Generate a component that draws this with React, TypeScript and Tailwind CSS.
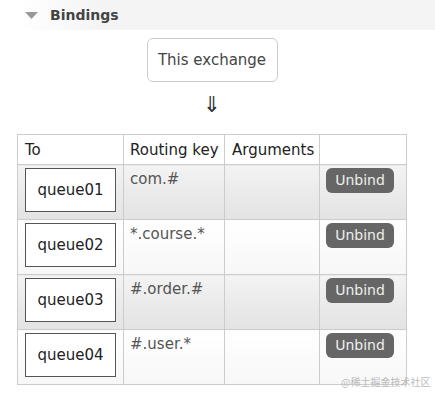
const rows = [
  { queue: "queue01", key: "com.#" },
  { queue: "queue02", key: "*.course.*" },
  { queue: "queue03", key: "#.order.#" },
  { queue: "queue04", key: "#.user.*" },
];

export default function App() {
  return (
    <div className="relative h-[403px] w-[435px] overflow-hidden bg-white font-['DejaVu_Sans',Verdana,sans-serif] text-[15px] text-[#222]">
      <div className="ml-[18px] flex h-[30px] items-center bg-gradient-to-r from-white to-[#f4f4f4] to-[20%] pl-[7px]">
        <svg width="13" height="7" viewBox="0 0 13 7" className="mt-[1px]">
          <polygon points="0,0 13,0 6.5,7" fill="#999" />
        </svg>
        <span className="ml-[12px] text-[14px] font-bold text-[#444]">Bindings</span>
      </div>

      <div className="ml-[17px] w-[390px]">
        <div className="mx-auto mt-[8px] flex h-[44px] w-[131px] items-center justify-center rounded-[6px] border border-[#ccc] text-[#444]">
          This exchange
        </div>
        <div className="mt-[10px] flex h-[26px] justify-center text-[22px] leading-[26px] text-[#333]">⇓</div>

        <table className="mt-[16px] w-[390px] table-fixed border-collapse whitespace-nowrap">
          <thead>
            <tr className="h-[30px] text-left">
              <th className="w-[106px] border border-[#ccc] px-[7px] pt-[2px] font-normal">To</th>
              <th className="w-[101px] border border-[#ccc] px-[6px] pt-[2px] font-normal">Routing key</th>
              <th className="w-[95px] border border-[#ccc] px-[7px] pt-[2px] font-normal">Arguments</th>
              <th className="border border-[#ccc] px-[7px] font-normal"></th>
            </tr>
          </thead>
          <tbody>
            {rows.map((r, i) => {
              const bg =
                i % 2 === 0
                  ? "bg-gradient-to-b from-[#f3f3f3] to-[#e3e3e3]"
                  : "bg-gradient-to-b from-white to-[#f7f7f7]";
              return (
                <tr key={r.queue} className="h-[55px]">
                  <td className={`border border-[#ccc] px-[7px] align-top pt-[3px] ${bg}`}>
                    <div className="flex h-[44px] w-[91px] items-center justify-center border border-[#555] bg-white">
                      {r.queue}
                    </div>
                  </td>
                  <td className={`border border-[#ccc] px-[6px] pt-[3px] align-top text-[#555] ${bg}`}>{r.key}</td>
                  <td className={`border border-[#ccc] ${bg}`}></td>
                  <td className={`border border-[#ccc] px-[6px] pt-[3px] align-top ${bg}`}>
                    <button className="flex h-[25px] w-[68px] items-center justify-center rounded-[6px] bg-[#666] text-[14px] text-[#eee]">
                      Unbind
                    </button>
                  </td>
                </tr>
              );
            })}
          </tbody>
        </table>
      </div>

      <div className="absolute left-[341px] top-[374px] whitespace-nowrap font-['Noto_Sans_CJK_SC',sans-serif] text-[10px] text-[#bbb]">
        @稀土掘金技术社区
      </div>
    </div>
  );
}
